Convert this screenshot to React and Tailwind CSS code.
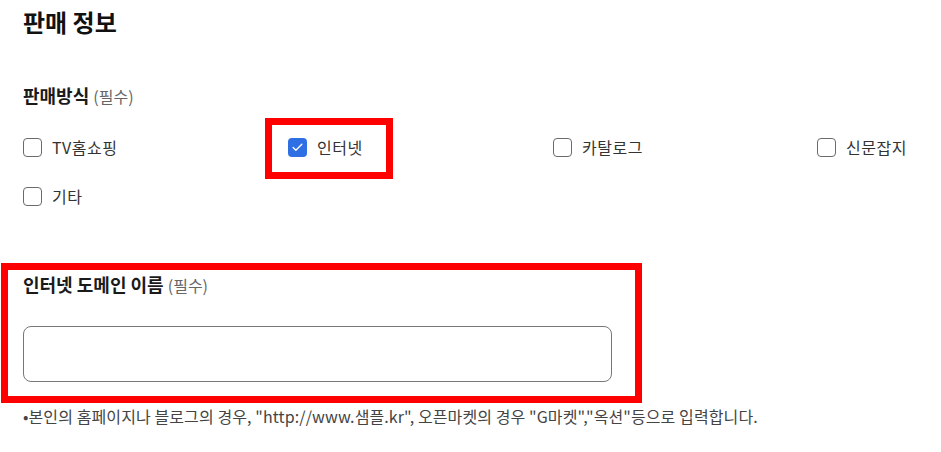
import { Check } from "lucide-react";

const options = [
  { id: "tv", label: "TV홈쇼핑", checked: false },
  { id: "internet", label: "인터넷", checked: true, marked: true },
  { id: "catalog", label: "카탈로그", checked: false },
  { id: "paper", label: "신문잡지", checked: false },
  { id: "etc", label: "기타", checked: false }
];

function Checkbox({ checked }) {
  if (checked) {
    return (
      <span className="flex h-[19px] w-[19px] shrink-0 items-center justify-center rounded-[4px] bg-[#2f6fe4]">
        <Check className="h-[13px] w-[13px] text-white" strokeWidth={2.5} />
      </span>
    );
  }
  return (
    <span className="h-[19px] w-[19px] shrink-0 rounded-[4px] border border-[#6b6b6b] bg-white" />
  );
}

export default function App() {
  return (
    <div className="min-h-[452px] w-[941px] overflow-hidden bg-white px-[23px] pt-[6px] font-['Noto_Sans_CJK_KR','Noto_Sans',sans-serif] text-[#222]">
      <h2 className="text-[24px] font-bold leading-[32px] text-[#111]">판매 정보</h2>

      <p className="mt-[45px] text-[18px] font-bold leading-[24px] text-[#1a1a1a]">
        판매방식 <span className="text-[16px] font-normal text-[#666]">(필수)</span>
      </p>

      <div className="mt-[27px] grid w-[1100px] grid-cols-[265px_265px_264px_265px] gap-y-[25px]">
        {options.map((option) => (
          <label key={option.id} className="relative flex h-[24px] items-center gap-[10px] text-[16px] leading-[24px] tracking-[0.5px] text-[#333]">
            <Checkbox checked={option.checked} />
            <span>{option.label}</span>
            {option.marked && (
              <span className="pointer-events-none absolute -left-[23px] -top-[17px] h-[61px] w-[128px] border-[7px] border-[#ff0000]" />
            )}
          </label>
        ))}
      </div>

      <div className="relative mt-[64px] w-[589px]">
        <p className="text-[18px] font-bold leading-[24px] text-[#1a1a1a]">
          인터넷 도메인 이름 <span className="text-[16px] font-normal text-[#666]">(필수)</span>
        </p>
        <input
          type="text"
          className="mt-[29px] block h-[56px] w-[589px] rounded-[8px] border border-[#777] bg-white px-4 text-[15px] outline-none"
        />
        <span className="pointer-events-none absolute -left-[22px] -top-[9px] h-[140px] w-[641px] border-[7px] border-[#ff0000]" />
      </div>

      <p className="mt-[24px] text-[16px] leading-[20px] tracking-[0.1px] text-[#444]">
        •본인의 홈페이지나 블로그의 경우, "http://www.샘플.kr", 오픈마켓의 경우 "G마켓","옥션"등으로 입력합니다.
      </p>
    </div>
  );
}
